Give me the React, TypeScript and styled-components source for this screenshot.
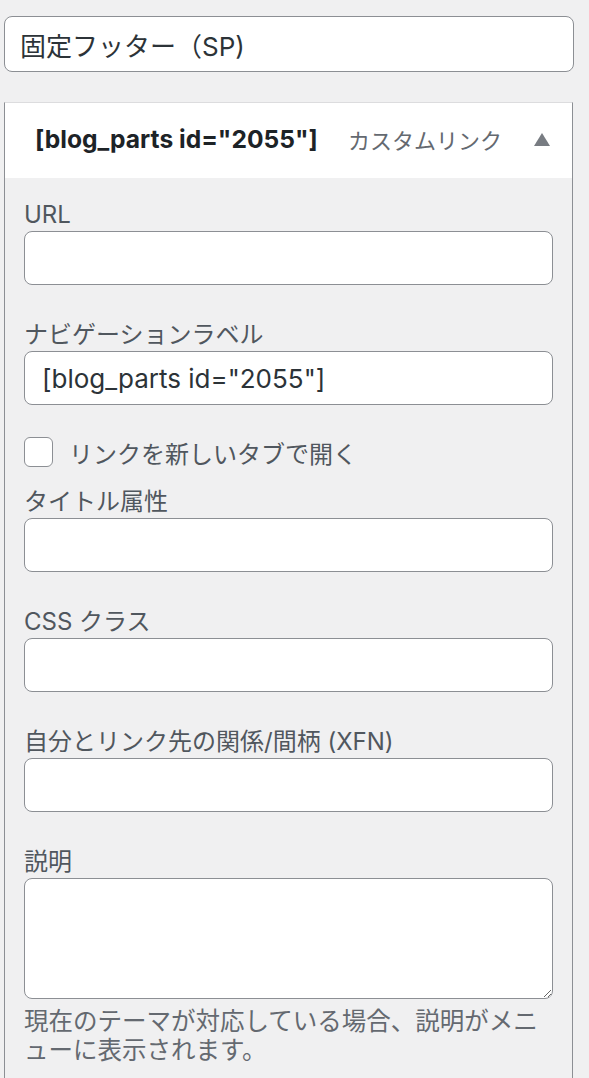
import styled, { createGlobalStyle } from 'styled-components';

const GlobalStyle = createGlobalStyle`
    body {
        margin : 0;
        background : #f0f0f1;
        font-family : Inter, "Noto Sans CJK JP", sans-serif;
        color : #3c434a;
    }
`

type Field = {
    label: string;
    value?: string;
};

const topFields: Field[] = [
    { label: 'URL' },
    { label: 'ナビゲーションラベル', value: '[blog_parts id="2055"]' },
];

const bottomFields: Field[] = [
    { label: 'タイトル属性' },
    { label: 'CSS クラス' },
    { label: '自分とリンク先の関係/間柄 (XFN)' },
];

const App = () => {
    return (
        <>
            <GlobalStyle />
            <Page>
                <MenuName defaultValue="固定フッター（SP)" />
                <Panel>
                    <Header>
                        <ItemTitle>[blog_parts id="2055"]</ItemTitle>
                        <ItemType>カスタムリンク</ItemType>
                        <Toggle width="16" height="13" viewBox="0 0 16 13">
                            <path d="M8 0 L16 13 L0 13 Z" fill="#787c82" />
                        </Toggle>
                    </Header>
                    <Body>
                        {topFields.map((f, i) => (
                            <FieldBlock key={i}>
                                <Label>{f.label}</Label>
                                <TextInput defaultValue={f.value ?? ''} />
                            </FieldBlock>
                        ))}
                        <CheckRow>
                            <Check type="checkbox" />
                            <CheckText>リンクを新しいタブで開く</CheckText>
                        </CheckRow>
                        {bottomFields.map((f, i) => (
                            <FieldBlock key={i}>
                                <Label>{f.label}</Label>
                                <TextInput defaultValue={f.value ?? ''} />
                            </FieldBlock>
                        ))}
                        <FieldBlock>
                            <Label>説明</Label>
                            <TextArea />
                            <Help>現在のテーマが対応している場合、説明がメニューに表示されます。</Help>
                        </FieldBlock>
                    </Body>
                </Panel>
            </Page>
        </>
    )
}

export default App;

const Page = styled.div`
    padding : 16px 15px 0 4px;
`

const MenuName = styled.input`
    display : block;
    box-sizing : border-box;
    width : 100%;
    height : 56px;
    margin : 0;
    padding : 0 15px;
    border : 1.5px solid #8c8f94;
    border-radius : 8px;
    background : #fff;
    font-family : inherit;
    font-size : 26px;
    color : #2c3338;
    outline : none;
`

const Panel = styled.div`
    margin-top : 30px;
    margin-right : 1px;
    border : 1.5px solid #8c8f94;
    border-top-color : #dcdcde;
    border-bottom : none;
    min-height : 980px;
`

const Header = styled.div`
    display : flex;
    align-items : center;
    height : 75px;
    padding : 0 22px 0 30px;
    background : #fff;
`

const ItemTitle = styled.span`
    flex : 1;
    font-size : 24.6px;
    font-weight : 700;
    color : #1d2327;
    margin-top : -3px;
`

const ItemType = styled.span`
    font-size : 22px;
    color : #646970;
    margin-right : 32px;
    margin-top : -3px;
`

const Toggle = styled.svg`
    display : block;
    margin-top : -3px;
`

const Body = styled.div`
    padding : 21px 19px 0 19px;
`

const FieldBlock = styled.div`
    margin-bottom : 34px;
`

const Label = styled.div`
    font-size : 24px;
    line-height : 32px;
    color : #50575e;
`

const TextInput = styled.input`
    display : block;
    box-sizing : border-box;
    width : 100%;
    height : 54px;
    margin : 0;
    padding : 0 17px;
    border : 1.5px solid #8c8f94;
    border-radius : 8px;
    background : #fff;
    font-family : inherit;
    font-size : 26px;
    color : #2c3338;
    outline : none;
`

const CheckRow = styled.label`
    display : flex;
    align-items : center;
    gap : 16px;
    height : 30px;
    margin : -2px 0 19px;
`

const Check = styled.input`
    appearance : none;
    flex : none;
    margin : 0;
    width : 29px;
    height : 30px;
    border : 1.5px solid #8c8f94;
    border-radius : 6px;
    background : #fff;
`

const CheckText = styled.span`
    font-size : 24px;
    color : #50575e;
`

const TextArea = styled.textarea`
    display : block;
    box-sizing : border-box;
    width : 100%;
    height : 121px;
    margin : 0;
    padding : 8px 17px;
    border : 1.5px solid #8c8f94;
    border-radius : 8px;
    background : #fff;
    font-family : inherit;
    font-size : 26px;
    resize : vertical;
    outline : none;
`

const Help = styled.p`
    margin : 8px 0 0;
    font-size : 24.5px;
    line-height : 29px;
    color : #646970;
`
